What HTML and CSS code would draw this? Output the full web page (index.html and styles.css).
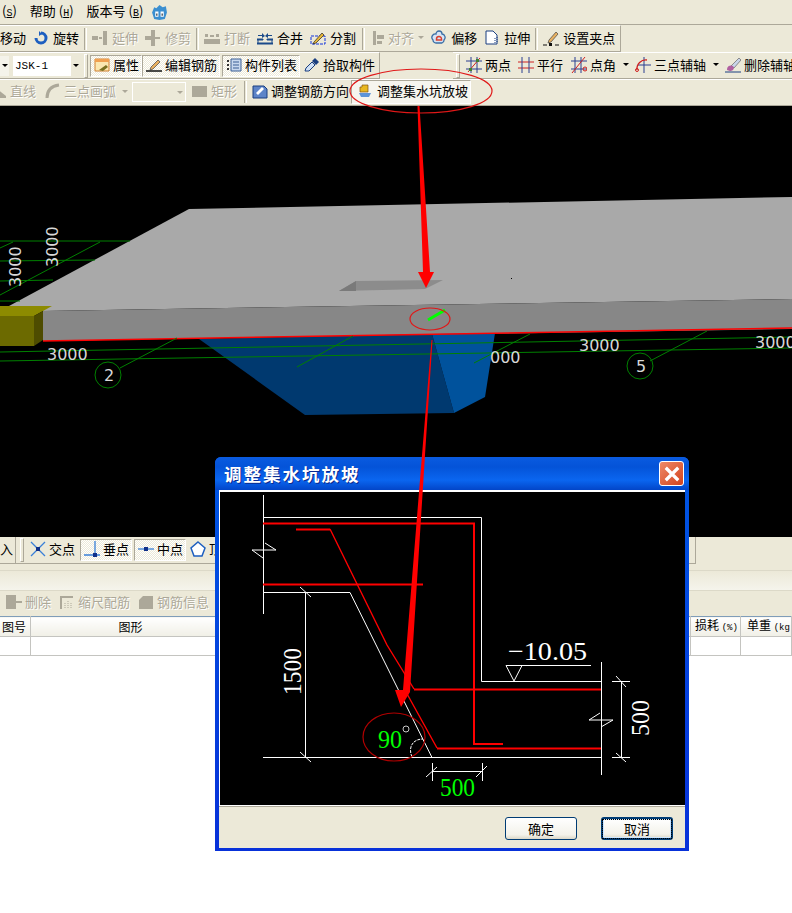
FILE: index.html
```html
<!DOCTYPE html>
<html lang="zh-CN">

<head>
	<meta charset="utf-8">
	<title>调整集水坑放坡</title>
	<link rel="stylesheet" href="styles.css">
</head>

<body>
	<div class="menubar">
		<span class="menu first">(<u>S</u>)</span>
		<span class="menu">帮助 (<u>H</u>)</span>
		<span class="menu">版本号 (<u>B</u>)</span>
		<svg class="logo" viewBox="0 0 16 16">
			<path d="M1 8 3 3l2 1 3-3 3 2 3-1 1 6-2 6-5 1-5-1z" fill="#3b8fd0" />
			<path d="M4 7h3v5H4zM9 7h3v5H9z" fill="#fff" />
			<path d="M5 9h1v2H5zM10 9h1v2h-1z" fill="#123" />
		</svg>
	</div>

	<div class="row row1">
		<div class="group">
			<span class="tool nopad">移动</span>
			<span class="tool"><svg class="ic" viewBox="0 0 16 16"><path d="M8 3a5 5 0 1 1-5 5" fill="none" stroke="#1d5fc0" stroke-width="3" /><path d="M6 1v5l3-2z" fill="#1d5fc0" /></svg>旋转</span>
			<i class="sep ml2"></i>
			<span class="tool off"><svg class="ic" viewBox="0 0 16 16"><path d="M0 6h6v4H0zM11 1h4v14h-4zM7 7h3v2H7z" fill="#aca899" /></svg>延伸</span>
			<span class="tool off"><svg class="ic" viewBox="0 0 16 16"><path d="M6 0h4v16H6zM0 6h6v4H0zM10 7h5v2h-5z" fill="#aca899" /></svg>修剪</span>
			<i class="sep"></i>
			<span class="tool off"><svg class="ic" viewBox="0 0 16 16"><path d="M0 9h16v5H0zM1 4h3v3H1zM6 5h4v2H6zM12 4h3v3h-3z" fill="#aca899" /></svg>打断</span>
			<span class="tool"><svg class="ic" viewBox="0 0 16 16"><path d="M0 9h6v1H0zM10 9h6v1h-6zM0 13h16v1H0zM1 9v5M15 9v5" stroke="#1a4a8a" fill="#1a4a8a" /><path d="M1 5h4V3l3 3-3 2V6H1zM15 5h-4V3L8 6l3 2V6h4z" fill="#1a4a8a" /></svg>合并</span>
			<span class="tool"><svg class="ic" viewBox="0 0 16 16"><path d="M1 6h14v8H1z" fill="none" stroke="#1133dd" stroke-dasharray="3 1" /><path d="m4 12 8-9 2 2-8 8-3 1z" fill="#e8b838" stroke="#222" stroke-width=".7" /></svg>分割</span>
			<i class="sep ml3"></i>
			<span class="tool off tight ml1"><svg class="ic" viewBox="0 0 16 16"><path d="M2 1h3v14H2zM6 5h7v4H6zM6 11h5v3H6z" fill="#aca899" /></svg>对齐<i class="drop grey"></i></span>
			<span class="tool"><svg class="ic" viewBox="0 0 16 16"><path d="M5 4a3 3 0 0 1 6 0 3.500 3.500 0 0 1 2 6 3 3 0 0 1-2 3H5a3 3 0 0 1-3-3 3.500 3.500 0 0 1 3-6z" fill="#d6e4f5" stroke="#3a6ea5" stroke-width="1.300" /><path d="M5.500 9a2.500 2.500 0 0 1 5 0v1h-5z" fill="none" stroke="#d84030" stroke-width="1.500" /></svg>偏移</span>
			<span class="tool"><svg class="ic" viewBox="0 0 16 16"><path d="M2 1h7l4 4v9H2z" fill="#fff" stroke="#1a3f80" /><path d="M11 8v6M13 7v5" stroke="#1a3f80" stroke-dasharray="1 1" /></svg>拉伸</span>
			<i class="sep"></i>
			<span class="tool"><svg class="ic" viewBox="0 0 16 16"><path d="m6 10 7-8 2 2-7 8-3 1z" fill="#e8b060" stroke="#444" stroke-width=".7" /><path d="M0 15h4M12 15h4" stroke="#111" /><path d="M6 13h3v3H6z" fill="#111" /></svg>设置夹点</span>
		</div>
	</div>

	<div class="row row2">
		<div class="group left">
			<span class="combo-stub"><i class="drop"></i></span>
			<span class="combo">JSK-1<b><i class="drop"></i></b></span>
			<i class="grip ml4"></i>
			<span class="tool btn"><svg class="ic" viewBox="0 0 16 16"><path d="M1 2h14v12H1z" fill="#fbe7b0" stroke="#d08030" /><path d="M1 2h14v3H1z" fill="#f0a050" /><path d="m5 13 7-5 2 2-5 4z" fill="#7a7020" /></svg>属性</span>
			<span class="tool btn"><svg class="ic" viewBox="0 0 16 16"><path d="m5 10 7-7 2 2-7 7-3 1z" fill="#e8b060" stroke="#444" stroke-width=".7" /><path d="M0 14h16" stroke="#111" stroke-width="1.500" /></svg>编辑钢筋</span>
			<span class="tool btn ml2"><svg class="ic" viewBox="0 0 16 16"><path d="M5 2h10v12H5z" fill="#c8d8ee" stroke="#3a5f95" /><path d="M7 5h6M7 8h6M7 11h6" stroke="#3a5f95" /><path d="M1 3h2v2H1zM1 7h2v2H1zM1 11h2v2H1z" fill="#333" /></svg>构件列表</span>
			<span class="tool"><svg class="ic" viewBox="0 0 16 16"><path d="m1 14 1-3 6-6 3 3-6 6z" fill="#cfe0f5" stroke="#1a3f80" /><path d="m8 4 3-3 4 4-3 3z" fill="#1a3f80" /></svg>拾取构件</span>
		</div>
		<div class="group right">
			<i class="grip"></i>
			<span class="tool"><svg class="ic" viewBox="0 0 16 16"><path d="M0 4h16M0 12h16M5 0v16M11 0v16" stroke="#2a3f90" /><path d="m2 15 12-14" stroke="#d02020" /><path d="M3 11h3v3H3zM10 2h3v3h-3z" fill="#408030" /></svg>两点</span>
			<span class="tool ml1"><svg class="ic" viewBox="0 0 16 16"><path d="M0 5h16M0 11h16" stroke="#d02020" /><path d="M4 0v16M11 0v16" stroke="#2a3f90" /></svg>平行</span>
			<span class="tool ml2"><svg class="ic" viewBox="0 0 16 16"><path d="M0 4h16M0 12h16M4 0v16M10 0v16" stroke="#2a3f90" /><path d="m1 16 13-16" stroke="#d02020" /><circle cx="14" cy="12" r="2" fill="none" stroke="#d02020" /></svg>点角<i class="drop wide-gap"></i></span>
			<span class="tool"><svg class="ic" viewBox="0 0 16 16"><path d="M9 0v16M3 8h13" stroke="#2a3f90" /><path d="M2 13a9 9 0 0 1 10-10" fill="none" stroke="#d02020" stroke-width="1.300" /><circle cx="2" cy="13" r="1.500" fill="none" stroke="#d02020" /></svg>三点辅轴<i class="drop wide-gap"></i></span>
			<span class="tool"><svg class="ic" viewBox="0 0 16 16"><path d="m6 9 8-8 2 2-7 8z" fill="#c8d4e8" stroke="#666" stroke-width=".7" /><path d="M2 13a4 4 0 0 1 6-4l1 2a4 4 0 0 1-4 3z" fill="#b060a0" /><path d="M0 15h16" stroke="#1a3f80" /></svg>删除辅轴</span>
		</div>
	</div>

	<div class="row row3">
		<span class="tool off pull"><svg class="ic" viewBox="0 0 16 16"><path d="m1 2 14 11v2H0V2z" fill="#aca899" /></svg>直线</span>
		<span class="tool off ml3"><svg class="ic" viewBox="0 0 16 16"><path d="M2 15C2 8 6 3 14 2" fill="none" stroke="#aca899" stroke-width="3" /></svg>三点画弧<i class="drop grey wide-gap"></i></span>
		<span class="combo dead"><i class="drop grey"></i></span>
		<span class="tool off ml2"><svg class="ic" viewBox="0 0 16 16"><path d="M0 3h15v11H0z" fill="#aca899" /></svg>矩形</span>
		<i class="sep ml5"></i>
		<span class="tool"><svg class="ic" viewBox="0 0 16 16"><path d="M1 3h11l3 3v9H1z" fill="#5d84c8" stroke="#1a3f80" /><path d="m4 10 6-6 2 2-6 6z" fill="#fff" /></svg>调整钢筋方向</span>
		<span class="tool active"><svg class="ic" viewBox="0 0 16 16"><path d="M2 10h12l-2 4H4z" fill="#5d94d8" /><path d="M3 9V4h2v-2h6v7z" fill="#e8b820" stroke="#805010" stroke-width=".7" /></svg>调整集水坑放坡</span>
	</div>

	<svg class="scene" viewBox="0 106 792 431">
		<path class="slab-top" d="M189 209 792 197V299L43 311 9 306z" />
		<path class="slab-side" d="M43 311 792 299V329L43 341z" />
		<path class="pit-hole" d="M339 291 356 281 443 280 425 289z" />
		<path class="pit-edge" d="M339 291 356 281V291z" />
		<path class="pit-front" d="M199 339 432 334 454 413 305 415z" />
		<path class="pit-side" d="M432 334 495 333 485 397 454 413z" />
		<path class="block-top" d="M0 306H52L34 316H0z" />
		<path class="block-front" d="M0 316H34V346H0z" />
		<path class="block-side" d="M34 316 43 311V340L34 346z" />
		<path class="edge" d="M43 341 792 328" />
		<path class="axis" d="M0 241 130 241M0 261 95 260M0 281 53 280M0 301 20 301M0 295 100 242M0 248 13 242M0 352 792 337M0 361 792 348M120 368 177 338M297 367 353 336M474 363 530 334M650 361 707 331" />
		<circle class="axis" cx="108" cy="375" r="13" />
		<circle class="axis" cx="640" cy="366" r="13" />
		<text class="dim" x="47" y="360">3000</text>
		<text class="dim" x="579" y="351">3000</text>
		<text class="dim" x="755" y="348">3000</text>
		<text class="dim" x="490" y="363">000</text>
		<text class="dim" transform="translate(21 287) rotate(-90)">3000</text>
		<text class="dim" transform="translate(58 267) rotate(-90)">3000</text>
		<text class="dim" x="104" y="381">2</text>
		<text class="dim" x="636" y="372">5</text>
		<path class="mark" d="M428 320 445 310" />
		<rect class="speck" x="511" y="278" width="1" height="1" />
	</svg>

	<div class="row bottombar">
		<div class="group">
			<span class="tool nopad clip">入</span>
			<i class="end"></i>
			<i class="grip"></i>
			<span class="tool"><svg class="ic" viewBox="0 0 16 16"><path d="m1 1 14 14M15 1 1 15" stroke="#3a80d8" stroke-width="1.300" /><path d="M6 6h4v4H6z" fill="#10308a" /></svg>交点</span>
			<span class="tool btn ml3"><svg class="ic" viewBox="0 0 16 16"><path d="M0 14h16M11 0v16" stroke="#3a80d8" stroke-width="1.300" /><path d="M9 12h4v4H9z" fill="#10308a" /></svg>垂点</span>
			<span class="tool btn ml2"><svg class="ic" viewBox="0 0 16 16"><path d="M0 8h16" stroke="#3a80d8" stroke-width="1.300" /><path d="M6 6h4v4H6z" fill="#10308a" /></svg>中点</span>
			<span class="tool"><svg class="ic" viewBox="0 0 16 16"><path d="M8 1 15 7 12 15H4L1 7z" fill="#fff" stroke="#1d5fc0" stroke-width="1.500" /></svg>顶点</span>
		</div>
	</div>

	<div class="stripe"></div>

	<div class="row subbar">
		<span class="tool off"><svg class="ic" viewBox="0 0 16 16"><path d="M0 1h10v14H0zM10 7h6v2h-6z" fill="#aca899" /></svg>删除</span>
		<span class="tool off ml2"><svg class="ic" viewBox="0 0 16 16"><path d="M1 2h13v2H3v11H1z" fill="#aca899" /><path d="M6 14V8M9 14V6M12 14V8" stroke="#aca899" stroke-dasharray="1 1" /></svg>缩尺配筋</span>
		<span class="tool off ml2"><svg class="ic" viewBox="0 0 16 16"><path d="M1 6 5 2h10v13H1z" fill="#aca899" /></svg>钢筋信息</span>
	</div>

	<table class="grid">
		<tr>
			<th class="c-no">图号</th>
			<th class="c-shape">图形</th>
			<th></th>
			<th class="c-loss">损耗 <small>(%)</small></th>
			<th class="c-unit">单重 <small>(kg)</small></th>
		</tr>
		<tr>
			<td></td>
			<td></td>
			<td></td>
			<td></td>
			<td></td>
		</tr>
	</table>

	<div class="dialog">
		<div class="titlebar">
			<span class="title">调整集水坑放坡</span>
			<span class="close"><svg viewBox="0 0 16 16"><path d="m3 3 10 10M13 3 3 13" stroke="#fff" stroke-width="2.600" /></svg></span>
		</div>
		<div class="canvas">
			<svg viewBox="220 492 465 313">
				<path class="wire" d="M263.500 495V614M263 517.500H481.500V681.500H601M601.500 662V775M263 592.500H350L432 757.500M263 757.500H601" />
				<path class="wire" d="M265 543 276 550H252L263 558M600 713 589 720H613L601 727" />
				<path class="wire" d="M305.500 592V757M300 587 311 597M300 752 311 762M621.500 681V757M612 681.500H630M612 757.500H630M616 676 626 687M616 753 626 762" />
				<path class="wire" d="M432.500 763V781M426 777 437 767M482.500 763V781M476 777 487 766M432 771.500H482" />
				<path class="wire" d="M506 665.500H591M506 665.500 514 681 522 665.500" />
				<path class="wire dash" d="M412 757C408 748 412 739 423 739" />
				<path class="bar" d="M263 523.500H474V744H503M296 529.500H330M263 584.500H423M414 689.500H601M437 748.500H601" />
				<path class="bar thin" d="M330 529 387 645 414 689M406 692 437 748" />
				<text class="cad" transform="translate(301 695) rotate(-90)" textLength="47" lengthAdjust="spacingAndGlyphs">1500</text>
				<text class="cad" transform="translate(649 736) rotate(-90)" textLength="36" lengthAdjust="spacingAndGlyphs">500</text>
				<text class="cad" x="508" y="660" textLength="79" lengthAdjust="spacingAndGlyphs">−10.05</text>
				<text class="cad green" x="440" y="796" textLength="35" lengthAdjust="spacingAndGlyphs">500</text>
				<text class="cad green" x="378" y="748" textLength="24" lengthAdjust="spacingAndGlyphs">90</text>
				<circle class="wire grey" cx="406" cy="729" r="3" />
			</svg>
		</div>
		<div class="dialog-foot">
			<button class="xp">确定</button>
			<button class="xp default"><span>取消</span></button>
		</div>
	</div>

	<svg class="notes" viewBox="0 0 792 913">
		<ellipse class="ring" cx="421" cy="91" rx="71" ry="22" />
		<ellipse class="ring" cx="430" cy="319" rx="20" ry="11" />
		<ellipse class="ring dark" cx="394" cy="737" rx="31" ry="24" />
		<path class="arrow" d="M417.500 106H419.500L430 272H434L426 288 418 272H423z" />
		<path class="arrow" d="M431.500 340H432.500L425 455 410 692 401 707 395 690 403 690 422 455z" />
	</svg>
</body>
</html>
```

FILE: styles.css
```css
html,
body {
	margin: 0;
	padding: 0;
}

body {
	position: relative;
	width: 792px;
	height: 913px;
	overflow: hidden;
	background-color: #fff;
	color: #000;
	font-family: 'Noto Sans CJK SC', 'Liberation Sans', sans-serif;
	font-size: 13px;
	line-height: 16px;
}

.menubar {
	display: flex;
	align-items: center;
	height: 24px;
	background-color: #ece9d8;
	border-bottom: 1px solid #aca899;
}

.menu {
	margin-left: 13px;
	white-space: nowrap;
}

.menu.first {
	margin-left: 2px;
}

.menu u {
	font-family: 'Liberation Mono', monospace;
	font-size: 10px;
}

.logo {
	width: 17px;
	height: 17px;
	margin-left: 8px;
}

.row {
	display: flex;
	align-items: center;
	height: 27px;
	background-color: #ece9d8;
	white-space: nowrap;
	overflow: hidden;
}

.group {
	display: flex;
	align-items: center;
	height: 100%;
	box-sizing: border-box;
	border-bottom: 1px solid #aca899;
}

.row1 .group {
	padding-right: 2px;
	border-top: 1px solid #fff;
	border-right: 1px solid #aca899;
}

.row2 {
	justify-content: space-between;
}

.row2 .group {
	border-top: 1px solid #fff;
}

.row2 .left {
	width: 380px;
	border-right: 1px solid #aca899;
}

.row2 .right {
	width: 339px;
	flex: none;
	padding-left: 2px;
}

.row2 .tool,
.row3 .tool,
.bottombar .tool,
.subbar .tool {
	gap: 3px;
	padding-right: 2px;
}

.row3 {
	box-sizing: border-box;
	padding-bottom: 1px;
	border-top: 1px solid #fff;
	border-bottom: 1px solid #aca899;
}

.tool {
	display: flex;
	flex: none;
	align-items: center;
	gap: 4px;
	height: 22px;
	box-sizing: border-box;
	padding: 0 3px 2px 4px;
}

.tool.nopad {
	padding-left: 0;
}

.tool.tight {
	gap: 1px;
}

.tool.off {
	color: #aca899;
	text-shadow: 1px 1px 0 #fff;
}

.tool.pull {
	margin-left: -13px;
}

.tool.btn {
	border: 1px solid;
	border-color: #aca899 #fff #fff #aca899;
	padding-left: 3px;
	background: repeating-conic-gradient(#fff 0 25%, #ece9d8 0 50%) 0 0 / 2px 2px;
}

.tool.active {
	height: 24px;
	padding-left: 5px;
	gap: 4px;
	border: 1px solid;
	border-color: #aca899 #fff #fff #aca899;
	background-color: #f6f5ee;
}

.ic {
	flex: none;
	width: 16px;
	height: 16px;
}

.sep {
	flex: none;
	width: 1px;
	height: 22px;
	margin: 0 1px 0 2px;
	border-left: 1px solid #aca899;
	border-right: 1px solid #fff;
}

.grip {
	flex: none;
	width: 2px;
	height: 22px;
	margin: 0 2px 0 1px;
	border: 1px solid;
	border-color: #fff #aca899 #aca899 #fff;
}

.end {
	flex: none;
	width: 1px;
	height: 100%;
	margin-left: 2px;
	background-color: #aca899;
}

.drop {
	flex: none;
	width: 0;
	height: 0;
	margin-left: 3px;
	border-top: 3px solid #000;
	border-left: 3px solid transparent;
	border-right: 3px solid transparent;
}

.drop.grey {
	border-top-color: #aca899;
}

.drop.wide-gap {
	margin-left: 5px;
}

.row2 .drop.wide-gap {
	margin-left: 4px;
}

.row3 .drop.wide-gap {
	margin-left: 3px;
}

.combo-stub {
	display: flex;
	align-items: center;
	justify-content: center;
	width: 9px;
	height: 20px;
	background-color: #f4f3ea;
}

.combo-stub .drop {
	margin: 0;
}

.combo {
	display: flex;
	align-items: center;
	justify-content: space-between;
	width: 67px;
	height: 20px;
	box-sizing: border-box;
	margin-left: 4px;
	padding-left: 2px;
	background-color: #fff;
	font-family: 'Liberation Mono', monospace;
	font-size: 11px;
}

.combo b {
	display: flex;
	align-items: center;
	justify-content: center;
	width: 9px;
	height: 100%;
	background-color: #ece9d8;
}

.combo b .drop {
	margin: 0;
}

.combo.dead {
	width: 54px;
	margin-left: 2px;
	justify-content: flex-end;
	padding-right: 2px;
	border: 1px solid #fff;
	background-color: transparent;
}

.scene {
	display: block;
	width: 792px;
	height: 431px;
	background-color: #000;
}

.slab-top {
	fill: #a9a9a9;
}

.slab-side {
	fill: #878787;
}

.pit-hole {
	fill: #8c8c8c;
}

.pit-edge {
	fill: #7a7a7a;
}

.pit-front {
	fill: #00396f;
}

.pit-side {
	fill: #00529c;
}

.block-top {
	fill: #8d8b00;
}

.block-front {
	fill: #6c6a00;
}

.block-side {
	fill: #4e4c00;
}

.edge {
	fill: none;
	stroke: #f00;
	stroke-width: 1.500;
}

.axis {
	fill: none;
	stroke: #008000;
	stroke-width: 1;
}

.dim {
	fill: #d8d8d8;
	font-family: 'DejaVu Sans', sans-serif;
	font-size: 16px;
}

.mark {
	stroke: #0f0;
	stroke-width: 3;
}

.speck {
	fill: #000;
}

.bottombar {
	height: 33px;
	align-items: flex-start;
}

.bottombar .group {
	width: 696px;
	height: 27px;
	border-right: 1px solid #aca899;
}

.bottombar .grip {
	margin-left: 4px;
}

.tool.clip {
	padding-right: 0;
}

.stripe {
	height: 19px;
	border-top: 1px solid #dcd9c8;
	background: linear-gradient(#ece9d8, #f5f4ec);
}

.subbar {
	height: 26px;
	box-sizing: border-box;
	padding-left: 2px;
	padding-bottom: 1px;
	border-top: 1px solid #dcd9c8;
}

.grid {
	width: 792px;
	table-layout: fixed;
	border-collapse: collapse;
	font-size: 12px;
}

.grid th {
	height: 19px;
	padding: 0;
	border-top: 1px solid #7f9db9;
	border-right: 1px solid #c4c4c0;
	border-bottom: 1px solid #c4c4c0;
	background: linear-gradient(#fff, #f0efe6);
	font-weight: normal;
	white-space: nowrap;
}

.grid td {
	height: 18px;
	padding: 0;
	border-right: 1px solid #c4c4c0;
	border-bottom: 1px solid #c4c4c0;
}

.grid small {
	font-family: 'Liberation Mono', monospace;
	font-size: 9px;
}

.c-no {
	width: 30px;
}

.c-shape {
	width: 200px;
}

.c-loss {
	width: 50px;
}

.c-unit {
	width: 51px;
	overflow: hidden;
}

.grid .c-no,
.grid .c-loss,
.grid .c-unit {
	box-sizing: border-box;
	text-align: left;
}

.grid .c-no {
	padding-left: 2px;
}

.grid .c-loss {
	padding-left: 4px;
}

.grid .c-unit {
	padding-left: 6px;
}

.dialog {
	position: absolute;
	left: 215px;
	top: 457px;
	display: flex;
	flex-direction: column;
	width: 474px;
	height: 394px;
	box-sizing: border-box;
	padding: 0 4px 3px;
	border-radius: 6px 6px 0 0;
	background: linear-gradient(#0058e6 0, #0054e3 33px, #0831d9 100%);
}

.titlebar {
	display: flex;
	align-items: center;
	justify-content: space-between;
	height: 33px;
	flex: none;
	margin: 0 -4px;
	padding: 0 5px 0 9px;
	border-radius: 6px 6px 0 0;
	background: linear-gradient(#0a5be0 0, #0453d8 30%, #0a66f0 70%, #0245c8 100%);
}

.title {
	color: #fff;
	font-size: 17.500px;
	font-weight: bold;
	letter-spacing: 2px;
	text-shadow: 1px 1px 0 #0a2a90;
}

.close {
	display: flex;
	align-items: center;
	justify-content: center;
	width: 23px;
	height: 23px;
	border: 1px solid #fff;
	border-radius: 3px;
	background: linear-gradient(135deg, #ee8a68, #d4421c);
}

.close svg {
	width: 20px;
	height: 20px;
}

.canvas {
	flex: none;
	height: 313px;
	padding: 2px 2px 1px 1px;
	background-color: #fff;
	border-bottom: 1px solid #aca899;
}

.canvas svg {
	display: block;
	width: 465px;
	height: 313px;
	background-color: #000;
}

.wire {
	fill: none;
	stroke: #fff;
	stroke-width: 1;
}

.wire.dash {
	stroke-dasharray: 3 1;
}

.wire.grey {
	stroke: #c8c8c8;
}

.bar {
	fill: none;
	stroke: #f00;
	stroke-width: 2;
}

.bar.thin {
	stroke-width: 1.400;
}

.cad {
	fill: #fff;
	font-family: 'Liberation Serif', serif;
	font-size: 26px;
}

.cad.green {
	fill: #0f0;
}

.dialog-foot {
	display: flex;
	flex: 1;
	justify-content: flex-end;
	align-items: flex-start;
	gap: 24px;
	padding: 10px 12px 0 0;
	background-color: #ece9d8;
}

.xp {
	width: 72px;
	height: 23px;
	padding: 0;
	border: 1px solid #003c74;
	border-radius: 3px;
	background: linear-gradient(#fff, #f3f2ea 80%, #dcd8c8);
	color: #000;
	font-family: inherit;
	font-size: 13px;
	line-height: 16px;
}

.xp.default {
	border-width: 2px;
	box-shadow: inset 0 0 0 1px #cee7ff;
}

.xp.default span {
	display: block;
	margin: 1px;
	outline: 1px dotted #000;
	outline-offset: 1px;
}

.notes {
	position: absolute;
	left: 0;
	top: 0;
	width: 792px;
	height: 913px;
	pointer-events: none;
}

.ring {
	fill: none;
	stroke: #e01818;
	stroke-width: 1.200;
}

.ring.dark {
	stroke: #b00000;
}

.arrow {
	fill: #f00;
}

.ml1 {
	margin-left: 1px;
}

.ml2 {
	margin-left: 2px;
}

.ml3 {
	margin-left: 3px;
}

.ml4 {
	margin-left: 4px;
}

.ml5 {
	margin-left: 5px;
}
```
